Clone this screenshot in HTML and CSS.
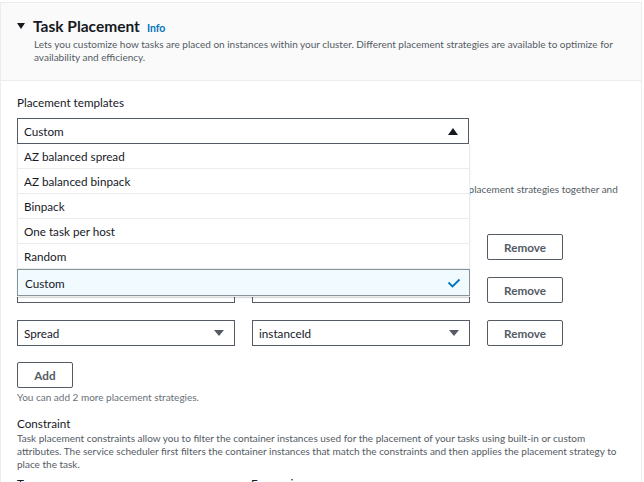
FILE: index.html
```html
<!DOCTYPE html>
<html>
<head>
<meta charset="utf-8">
<link rel="stylesheet" href="styles.css">
</head>
<body>
<div class="panel">
  <div class="header">
    <div class="title-row">
      <span class="caret"></span>
      <h2 class="title">Task Placement</h2>
      <a class="info">Info</a>
    </div>
    <p class="desc">Lets you customize how tasks are placed on instances within your cluster. Different placement strategies are available to optimize for availability and efficiency.</p>
  </div>
  <div class="body">
    <div class="field">
      <div class="label">Placement templates</div>
      <div class="select-wrap">
        <div class="select open"><span>Custom</span><span class="tri up"></span></div>
        <ul class="menu">
          <li>AZ balanced spread</li>
          <li>AZ balanced binpack</li>
          <li>Binpack</li>
          <li>One task per host</li>
          <li>Random</li>
          <li class="selected">Custom<svg class="check" width="14" height="10" viewBox="0 0 14 10"><path d="M1.5 4.5 L5.5 8.5 L12.5 1.5" fill="none" stroke="#0073bb" stroke-width="1.8"/></svg></li>
        </ul>
      </div>
    </div>
    <div class="strategy">
      <div class="label">Strategy</div>
      <p class="desc">Tasks are placed on instances as defined by the chosen placement strategies. You can combine multiple placement strategies together and they are evaluated in order.</p>
    </div>
    <div class="rows">
      <div class="row">
        <div class="select small"><span>AZ Balanced Spread</span><span class="tri"></span></div>
        <div class="select small"><span>attribute:ecs.availability-zone</span><span class="tri"></span></div>
        <button class="btn">Remove</button>
      </div>
      <div class="row">
        <div class="select small"><span>Spread</span><span class="tri"></span></div>
        <div class="select small"><span>attribute:ecs.availability-zone</span><span class="tri"></span></div>
        <button class="btn">Remove</button>
      </div>
      <div class="row">
        <div class="select small"><span>Spread</span><span class="tri"></span></div>
        <div class="select small"><span>instanceId</span><span class="tri"></span></div>
        <button class="btn">Remove</button>
      </div>
    </div>
    <button class="btn add">Add</button>
    <p class="hint">You can add 2 more placement strategies.</p>
    <div class="constraint">
      <div class="label">Constraint</div>
      <p class="desc">Task placement constraints allow you to filter the container instances used for the placement of your tasks using built-in or custom attributes. The service scheduler first filters the container instances that match the constraints and then applies the placement strategy to place the task.</p>
      <div class="cols">
        <div class="label col">Type</div>
        <div class="label col">Expression</div>
      </div>
    </div>
  </div>
</div>
</body>
</html>
```
FILE: styles.css
```css
* { box-sizing: border-box; }
html, body { margin: 0; padding: 0; background: #fff; }
body { font-family: Lato, "Open Sans", sans-serif; color: #16191f; overflow: hidden; }
.panel {
  margin-top: 2px;
  width: 642px;
  border: 1px solid #eaeded;
  border-bottom: none;
  height: 500px;
}
.header {
  background: #fafafa;
  border-bottom: 1px solid #eaeded;
  padding: 12px 16px 0 16px;
  height: 78px;
}
.title-row { display: flex; align-items: baseline; height: 22px; }
.caret {
  width: 0; height: 0;
  border-left: 4.5px solid transparent;
  border-right: 4.5px solid transparent;
  border-top: 6px solid #16191f;
  margin-right: 8px;
  align-self: center;
}
.title { font-size: 15.5px; font-weight: 700; margin: 0; line-height: 22px; }
.info { font-size: 10.5px; font-weight: 700; color: #0073bb; margin-left: 7px; }
.desc { margin: 0; font-size: 10px; line-height: 13px; color: #545b64; }
.header .desc { padding-left: 17px; margin-top: 1px; }
.body { padding: 13px 16px 0 16px; }
.label { font-size: 11.7px; line-height: 16px; }
.field .label { margin-bottom: 8px; }
.select-wrap { position: relative; width: 452px; }
.select {
  display: flex; justify-content: space-between; align-items: center;
  height: 26px; border: 1px solid #545b64; padding: 0 10px 0 6px;
  font-size: 11.7px; background: #fff;
}
.tri { width: 0; height: 0; border-left: 5px solid transparent; border-right: 5px solid transparent; border-top: 6px solid #545b64; }
.tri.up { border-top: none; border-bottom: 7px solid #16191f; }
.menu {
  position: absolute; left: 0; top: 26px; width: 453px; margin: 0; padding: 0;
  list-style: none; background: #fff; border: 1px solid #eaeded; border-top: none; z-index: 5;
  box-shadow: 0 1px 1px rgba(0,0,0,0.15);
}
.menu li {
  height: 25px; line-height: 24px; font-size: 11.7px; padding: 0 6px;
  border-bottom: 1px solid #eaeded; display: flex; justify-content: space-between; align-items: center;
}
.menu li.selected { background: #f1faff; border: 1px solid #879596; height: 27px; margin: 0 -1px; padding: 0 8px 0 7px; }
.strategy { margin-top: 19px; }
.strategy .desc { margin-top: 4px; width: 606px; }
.rows { display: flex; flex-direction: column; gap: 17px; margin-top: 25px; }
.row { display: flex; gap: 17px; }
.select.small { width: 218px; }
.btn {
  height: 26px; width: 76px; border: 1px solid #545b64; background: #fff; border-radius: 2px;
  font-family: inherit; font-size: 11.7px; font-weight: 700; color: #545b64;
}
.add { width: 56px; margin: 16px 0 0 0; }
.hint { margin: 2px 0 0; font-size: 10px; line-height: 14px; color: #687078; }
.constraint { margin-top: 11px; }
.constraint .desc { margin-top: 1px; }
.cols { display: flex; margin-top: 4px; }
.col { width: 234px; }
```
